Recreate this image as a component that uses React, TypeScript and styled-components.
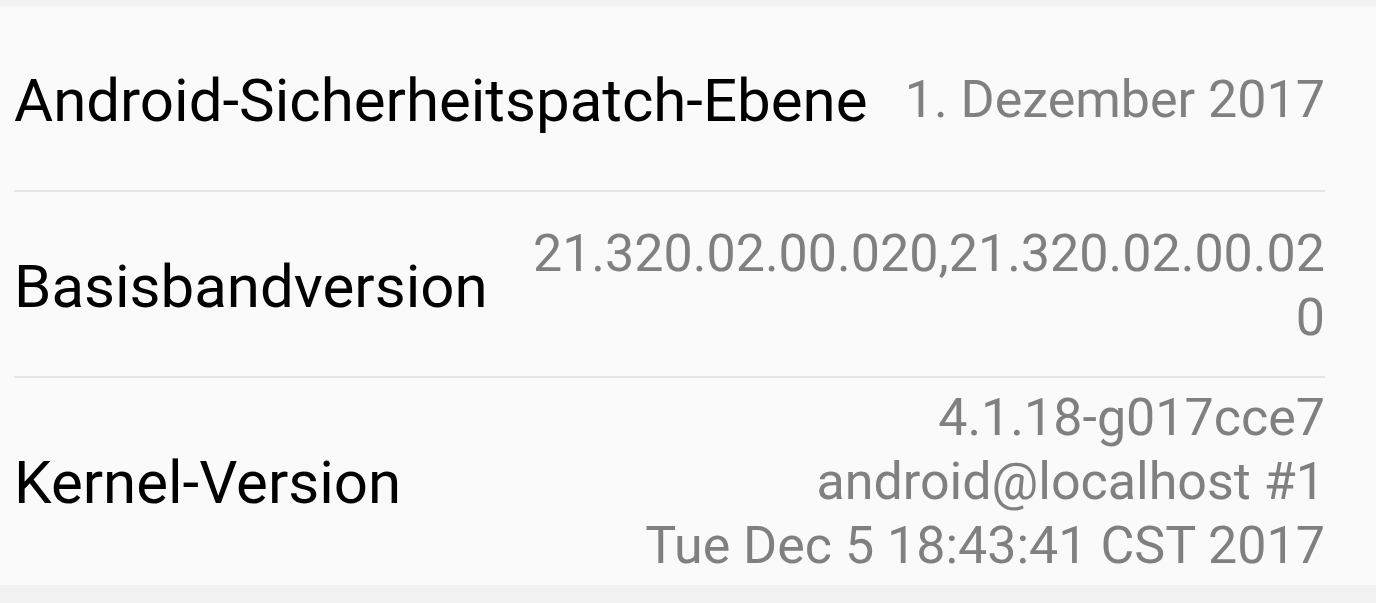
import React from "react";
import styled, { createGlobalStyle } from "styled-components";

const Global = createGlobalStyle`
  html, body { margin: 0; padding: 0; }
  body { background: #f2f2f2; font-family: Roboto, "Noto Sans", sans-serif; }
`;

const Page = styled.div`
  width: 1376px;
  height: 603px;
  background: #f2f2f2;
  padding-top: 6px;
  box-sizing: border-box;
  overflow: hidden;
`;

const Card = styled.div`
  background: #fafafa;
  padding: 0 51px 0 14px;
`;

const Row = styled.div<{ $minH: number; $last?: boolean }>`
  display: flex;
  align-items: center;
  gap: 32px;
  min-height: ${(p) => p.$minH}px;
  box-sizing: border-box;
  padding: ${(p) => (p.$last ? "8px 0 7px" : "10px 0 6px")};
  border-bottom: ${(p) => (p.$last ? "none" : "2px solid #e6e6e6")};
`;

const Title = styled.div`
  flex: 0 0 auto;
  font-size: 60px;
  color: #000;
  white-space: nowrap;
`;

const Value = styled.div`
  flex: 1 1 auto;
  min-width: 0;
  text-align: right;
  font-size: 52px;
  line-height: 64px;
  color: #808080;
  word-break: break-all;
`;

const rows = [
  { title: "Android-Sicherheitspatch-Ebene", value: ["1. Dezember 2017"], h: 186 },
  { title: "Basisbandversion", value: ["21.320.02.00.020,21.320.02.00.020"], h: 186 },
  {
    title: "Kernel-Version",
    value: ["4.1.18-g017cce7", "android@localhost #1", "Tue Dec 5 18:43:41 CST 2017"],
    h: 207,
  },
];

export default function App() {
  return (
    <Page>
      <Global />
      <Card>
        {rows.map((r, i) => (
          <Row key={r.title} $minH={r.h} $last={i === rows.length - 1}>
            <Title>{r.title}</Title>
            <Value>
              {r.value.map((v) => (
                <div key={v}>{v}</div>
              ))}
            </Value>
          </Row>
        ))}
      </Card>
    </Page>
  );
}
